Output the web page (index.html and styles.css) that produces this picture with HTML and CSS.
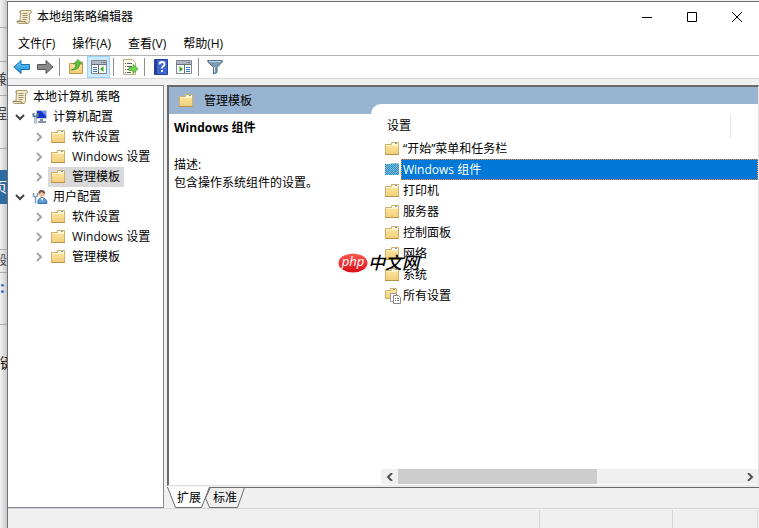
FILE: index.html
```html
<!DOCTYPE html>
<html lang="zh-CN">
    <head>
        <meta charset="utf-8">
        <meta name="viewport" content="width=device-width, initial-scale=1" />
        <title>本地组策略编辑器</title>
        <link rel="stylesheet" href="styles.css">
    </head>
    <body>
        <!-- ICONS -->
        <svg class="icon-defs" width="0" height="0">
            <defs>
                <linearGradient id="gold" x1="0" y1="0" x2="0" y2="1">
                    <stop offset="0" stop-color="#ffe9a6" />
                    <stop offset="1" stop-color="#f2ce78" />
                </linearGradient>
                <linearGradient id="blue" x1="0" y1="0" x2="0" y2="1">
                    <stop offset="0" stop-color="#6fd0fb" />
                    <stop offset="1" stop-color="#118ad8" />
                </linearGradient>
                <linearGradient id="red" x1="0" y1="0" x2="0" y2="1">
                    <stop offset="0" stop-color="#ff5a50" />
                    <stop offset="1" stop-color="#d80c18" />
                </linearGradient>
            </defs>
            <symbol id="folder" viewBox="0 0 16 16">
                <path d="M.5 3.500h6v-2h7v12H.5z" fill="url(#gold)" stroke="#d2b06a" />
                <path d="M7 2h6v2H7z" fill="#fff8dc" />
                <path d="M10 2h2v1h-2z" fill="#5d9fd8" />
                <path d="M1 4.500h12" stroke="#fff2c4" />
                <path d="M0 13.500h14" stroke="#b9924a" />
            </symbol>
            <symbol id="folder-selected" viewBox="0 0 16 16">
                <path d="M0 2h6V1h8v12H0z" fill="#8cc4d0" />
                <path d="M0 2.500h14M0 4.500h14M0 6.500h14M0 8.500h14M0 10.500h14M0 12.500h14M1 3.500h13M1 5.500h13M1 7.500h13M1 9.500h13M1 11.500h13" stroke="#1a86cf" stroke-dasharray="1 1" />
            </symbol>
            <symbol id="scroll" viewBox="0 0 16 16">
                <path d="M4.500 1.500h9.500q1.500 0 1.500 1.500t-2 1.500v7q0 3-2 3h-9q-2-.5-1.500-2.500h3z" fill="#f6ecc9" stroke="#a99a75" />
                <path d="M1 12.500h8.500q0 2 2 2" fill="#e7d9ab" stroke="#94865f" />
                <path d="M4.500 1.500q-1.500 1 0 3h1" fill="none" stroke="#a99a75" />
                <path d="M6.500 4.500h5M6.500 6.500h5M6.500 8.500h5M6.500 10.500h4" stroke="#9c9279" />
            </symbol>
            <symbol id="computer" viewBox="0 0 16 16">
                <path d="M4.500 1.500h10v8h-10z" fill="#1733c8" stroke="#c3c9d5" />
                <path d="M9 2h5v5z" fill="#6f92f3" />
                <path d="M8 10h3v2h3v2H6v-2h2z" fill="#8793a6" />
                <path d="M1.500 4v3l2 1 2-1V4M3.500 8v6.500" fill="none" stroke="#57799c" stroke-width="2" />
                <path d="M3.500 8v6" stroke="#bfdaf0" />
            </symbol>
            <symbol id="user" viewBox="0 0 16 16">
                <path d="M6 14.500q-1-5 4-6 5 1 5 6z" fill="#5d9ad3" stroke="#3770a9" />
                <path d="M8.500 9l1.500 3 1.500-3z" fill="#fff" />
                <circle cx="10" cy="5" r="3" fill="#efc49a" />
                <path d="M6.500 5q-.5-4 3-4 4 0 3.500 4-2-1-3.500-2.500-1 2-3 2.500z" fill="#665044" />
                <path d="M1.500 4v3l2 1 2-1V4M3.500 8v6.500" fill="none" stroke="#7d9dbd" stroke-width="1.500" />
            </symbol>
            <symbol id="all-settings" viewBox="0 0 16 16">
                <path d="M.5 2.500h5v-2h6v10H.5z" fill="url(#gold)" stroke="#d2b06a" />
                <path d="M8 1.500h2" stroke="#5d9fd8" />
                <path d="M5.500 5.500h5l2 2v6h-7z" fill="#fff" stroke="#999" />
                <path d="M8.500 7.500h5l2 2v6h-7z" fill="#fff" stroke="#888" />
                <path d="M10 10.500h1M12 10.500h2M10 12.500h1M12 12.500h2" stroke="#777" />
            </symbol>
            <symbol id="chevron-down" viewBox="0 0 10 10">
                <path d="M1 3l4 4 4-4" fill="none" stroke="#404040" stroke-width="2" />
            </symbol>
            <symbol id="chevron-right" viewBox="0 0 10 10">
                <path d="M3 1l4 4-4 4" fill="none" stroke="#a6a6a6" stroke-width="2" />
            </symbol>
        </svg>

        <div class="desktop">
            <!-- page that shows at the left of the window -->
            <div class="behind" aria-hidden="true">
                <div class="behind-line short"></div>
                <div class="behind-line"></div>
                <div class="behind-line">兼</div>
                <div class="behind-line tall">程</div>
                <div class="behind-gap"></div>
                <div class="behind-blue">页</div>
                <div class="behind-line field"></div>
                <div class="behind-line field-text">段</div>
                <div class="behind-line colon">:</div>
                <div class="behind-key">键</div>
            </div>

            <div class="window">
                <header class="title-bar">
                    <svg class="icon"><use href="#scroll" /></svg>
                    <h1>本地组策略编辑器</h1>
                    <button class="window-button" aria-label="最小化">
                        <svg width="10" height="10"><path d="M0 5.500h10" stroke="#000" /></svg>
                    </button>
                    <button class="window-button" aria-label="最大化">
                        <svg width="10" height="10"><path d="M.5 .5h9v9h-9z" fill="none" stroke="#000" /></svg>
                    </button>
                    <button class="window-button" aria-label="关闭">
                        <svg width="10" height="10"><path d="M0 0l10 10M10 0L0 10" stroke="#000" /></svg>
                    </button>
                </header>

                <nav class="menu-bar">
                    <button>文件(F)</button>
                    <button>操作(A)</button>
                    <button>查看(V)</button>
                    <button>帮助(H)</button>
                </nav>

                <div class="toolbar">
                    <button aria-label="后退">
                        <svg width="18" height="16"><path d="M1 8l7-6.500v4h8.500v5H8v4z" fill="url(#blue)" stroke="#1b6fae" /></svg>
                    </button>
                    <button aria-label="前进">
                        <svg width="18" height="16"><path d="M17 8l-7-6.500v4H1.500v5H10v4z" fill="#8b8b8b" stroke="#555" /></svg>
                    </button>
                    <span class="separator"></span>
                    <button aria-label="上一级">
                        <svg width="16" height="16">
                            <path d="M1.500 4.500h7l1.500-1.500h4.500v11.500h-13z" fill="url(#gold)" stroke="#c09748" />
                            <path d="M3 11q5-1 5-6H5.500L10 .5l4 4.500h-2.500q0 6-8.500 6z" fill="#5cc23c" stroke="#37862a" stroke-width=".7" />
                        </svg>
                    </button>
                    <button class="pressed" aria-label="显示/隐藏控制台树">
                        <svg width="16" height="16">
                            <path d="M.5 1.500h15v13H.5z" fill="#fff" stroke="#7d8590" />
                            <path d="M1 2h14v3H1z" fill="#aeb6c1" />
                            <path d="M1 5.500h14M7.500 6v8M10 3.500h1M12 3.500h2" stroke="#68717e" />
                            <path d="M2 8.500h4M2 10.500h4M2 12.500h4" stroke="#3878bd" />
                            <path d="M12.500 7v6L9 10z" fill="#35a81f" />
                        </svg>
                    </button>
                    <span class="separator"></span>
                    <button aria-label="导出列表">
                        <svg width="16" height="16">
                            <path d="M1.500 .5h9l3 3v12h-12z" fill="#fffbe6" stroke="#b9ad83" />
                            <path d="M3 4.500h1M5 4.500h5M3 7.500h1M5 7.500h5M3 10.500h1M5 10.500h4M3 13.500h1M5 13.500h4" stroke="#55607b" />
                            <path d="M7 8.500h4V5.500l5 4.500-5 4.500v-3H7z" fill="#6fd44f" stroke="#41992c" stroke-width=".7" />
                        </svg>
                    </button>
                    <span class="separator"></span>
                    <button aria-label="帮助">
                        <svg width="14" height="16">
                            <path d="M.5 .5h13v15H.5z" fill="#3f66cf" stroke="#23449d" />
                            <path d="M1 1h2v14H1z" fill="#21408f" />
                            <path d="M5.500 5.500q0-2.500 2.500-2.500t2.500 2.200q0 1.400-1.500 2.200-1 .6-1 2.100M8 11v2" fill="none" stroke="#fff" stroke-width="1.800" />
                        </svg>
                    </button>
                    <button aria-label="显示/隐藏操作窗格">
                        <svg width="16" height="16">
                            <path d="M.5 1.500h15v13H.5z" fill="#fff" stroke="#7d8590" />
                            <path d="M1 2h14v3H1z" fill="#aeb6c1" />
                            <path d="M1 5.500h14M8.500 6v8M10 3.500h1M12 3.500h2" stroke="#68717e" />
                            <path d="M10 8.500h4M10 10.500h4M10 12.500h4" stroke="#3878bd" />
                            <path d="M3.500 7v6L7 10z" fill="#35a81f" />
                        </svg>
                    </button>
                    <span class="separator"></span>
                    <button aria-label="筛选器">
                        <svg width="16" height="16">
                            <path d="M.8 1.500h14.400v1.500L10 8.500v5L6.500 15V8.500L.8 3z" fill="#7c9cb4" stroke="#4e6b82" />
                            <path d="M2 2.500h12" stroke="#c7dbe9" />
                            <path d="M7.500 8v5.500" stroke="#dbe8f0" />
                        </svg>
                    </button>
                </div>

                <div class="panes">
                    <nav class="tree">
                        <button class="tree-item root"><svg class="icon"><use href="#scroll" /></svg><span>本地计算机 策略</span></button>
                        <button class="tree-item branch"><svg class="chevron"><use href="#chevron-down" /></svg><svg class="icon"><use href="#computer" /></svg><span>计算机配置</span></button>
                        <button class="tree-item"><svg class="chevron"><use href="#chevron-right" /></svg><svg class="icon"><use href="#folder" /></svg><span>软件设置</span></button>
                        <button class="tree-item"><svg class="chevron"><use href="#chevron-right" /></svg><svg class="icon"><use href="#folder" /></svg><span>Windows 设置</span></button>
                        <button class="tree-item selected"><svg class="chevron"><use href="#chevron-right" /></svg><svg class="icon"><use href="#folder" /></svg><span>管理模板</span></button>
                        <button class="tree-item branch"><svg class="chevron"><use href="#chevron-down" /></svg><svg class="icon"><use href="#user" /></svg><span>用户配置</span></button>
                        <button class="tree-item"><svg class="chevron"><use href="#chevron-right" /></svg><svg class="icon"><use href="#folder" /></svg><span>软件设置</span></button>
                        <button class="tree-item"><svg class="chevron"><use href="#chevron-right" /></svg><svg class="icon"><use href="#folder" /></svg><span>Windows 设置</span></button>
                        <button class="tree-item"><svg class="chevron"><use href="#chevron-right" /></svg><svg class="icon"><use href="#folder" /></svg><span>管理模板</span></button>
                    </nav>

                    <main class="details">
                        <div class="details-frame">
                            <div class="details-title">
                                <svg class="icon"><use href="#folder" /></svg>
                                <h2>管理模板</h2>
                            </div>
                            <div class="details-body">
                                <section class="description">
                                    <h3>Windows 组件</h3>
                                    <p>描述:</p>
                                    <p>包含操作系统组件的设置。</p>
                                </section>
                                <section class="settings">
                                    <div class="column-header">设置</div>
                                    <div class="setting-list">
                                        <button class="setting"><svg class="icon"><use href="#folder" /></svg><span>“开始”菜单和任务栏</span></button>
                                        <button class="setting selected"><svg class="icon"><use href="#folder-selected" /></svg><span>Windows 组件</span></button>
                                        <button class="setting"><svg class="icon"><use href="#folder" /></svg><span>打印机</span></button>
                                        <button class="setting"><svg class="icon"><use href="#folder" /></svg><span>服务器</span></button>
                                        <button class="setting"><svg class="icon"><use href="#folder" /></svg><span>控制面板</span></button>
                                        <button class="setting"><svg class="icon"><use href="#folder" /></svg><span>网络</span></button>
                                        <button class="setting"><svg class="icon"><use href="#folder" /></svg><span>系统</span></button>
                                        <button class="setting"><svg class="icon"><use href="#all-settings" /></svg><span>所有设置</span></button>
                                    </div>
                                    <div class="scrollbar">
                                        <button aria-label="向左滚动">
                                            <svg width="8" height="8"><path d="M6 0L2 4l4 4" fill="none" stroke="#505050" stroke-width="2" /></svg>
                                        </button>
                                        <div class="scroll-track"><div class="scroll-thumb"></div></div>
                                        <button aria-label="向右滚动">
                                            <svg width="8" height="8"><path d="M2 0l4 4-4 4" fill="none" stroke="#505050" stroke-width="2" /></svg>
                                        </button>
                                    </div>
                                </section>
                            </div>
                            <div class="watermark">
                                <svg width="30" height="20">
                                    <ellipse cx="15" cy="10" rx="14.500" ry="9.500" fill="url(#red)" />
                                    <text x="15" y="13" text-anchor="middle" class="watermark-php">php</text>
                                </svg>
                                <span>中文网</span>
                            </div>
                        </div>
                        <div class="tabs">
                            <svg class="tab-shapes" width="80" height="21">
                                <path d="M43.500 .5L38.500 11l4 9.500h28l7-20z" fill="#f0f0f0" stroke="#6d6d6d" />
                                <path d="M.5 0l8 20.500h26L42.500 0z" fill="#fff" />
                                <path d="M.5 0l8 20.500h26L42.500 0" fill="none" stroke="#6d6d6d" />
                            </svg>
                            <button class="tab">扩展</button>
                            <button class="tab">标准</button>
                        </div>
                    </main>
                </div>

                <footer class="status-bar">
                    <div class="status-main"></div>
                    <div class="status-middle"></div>
                    <div class="status-end"></div>
                </footer>
            </div>
        </div>
    </body>
</html>
```
FILE: styles.css
```css
* {
    box-sizing: border-box;
}

body {
    margin: 0;
    font-family: "Open Sans", "Noto Sans CJK SC", sans-serif;
    font-size: 12px;
    line-height: 20px;
    color: #000;
    background-color: #f0f0f0;
}

h1, h2, h3, p {
    margin: 0;
    font-size: 12px;
    font-weight: 400;
}

button {
    padding: 0;
    border: 0;
    background: none;
    font: inherit;
    color: inherit;
    white-space: nowrap;
}

svg {
    display: block;
    flex: none;
}

.icon-defs {
    position: absolute;
}

.icon {
    width: 16px;
    height: 16px;
}

.desktop {
    display: flex;
    height: 100vh;
    overflow: hidden;
}

/* STRIP AT THE LEFT */

.behind {
    display: flex;
    flex-direction: column;
    width: 7px;
    flex: none;
    overflow: hidden;
    background: linear-gradient(to right, #f2f2f2, #c8c8c8);
    color: #444;
    font-size: 14px;
}

.behind-line {
    display: flex;
    align-items: center;
    justify-content: flex-end;
    height: 34px;
    flex: none;
    border-bottom: 1px solid #aaa;
}

.behind-line.short {
    height: 28px;
}

.behind-line.tall {
    height: 53px;
    padding-bottom: 18px;
}

.behind-gap {
    height: 21px;
    flex: none;
}

.behind-blue {
    display: flex;
    align-items: center;
    justify-content: flex-end;
    height: 34px;
    flex: none;
    background-color: #2d6ca2;
    color: #fff;
}

.behind-line.field {
    height: 46px;
}

.behind-line.field-text {
    height: 23px;
    font-size: 12px;
}

.behind-line.colon {
    height: 52px;
    padding-bottom: 24px;
    justify-content: flex-start;
    color: #2d6ce0;
    font-weight: 700;
    font-size: 16px;
}

.behind-key {
    display: flex;
    justify-content: flex-start;
    padding-top: 28px;
    color: #111;
}

/* WINDOW */

.window {
    display: flex;
    flex-direction: column;
    flex: 1;
    min-width: 0;
    margin-top: 1px;
    border-top: 1px solid #6d6d6d;
    border-left: 1px solid #6f7277;
    background-color: #f0f0f0;
}

.title-bar {
    display: flex;
    align-items: center;
    height: 30px;
    flex: none;
    padding-left: 8px;
    background-color: #fff;
}

.title-bar h1 {
    flex: 1;
    margin-left: 5px;
}

.window-button {
    display: flex;
    align-items: center;
    justify-content: center;
    width: 45px;
    height: 28px;
}

.menu-bar {
    display: flex;
    gap: 17px;
    height: 24px;
    flex: none;
    padding-left: 10px;
    border-bottom: 1px solid #b4b4b4;
    background-color: #fff;
}

.toolbar {
    display: flex;
    align-items: center;
    height: 23px;
    flex: none;
    padding-left: 2px;
    border-bottom: 1px solid #d9d9d9;
    background-color: #fff;
}

.toolbar button {
    display: flex;
    align-items: center;
    justify-content: center;
    width: 23px;
    height: 22px;
}

.toolbar .pressed {
    border: 1px solid #99d1ff;
    background-color: #cce8ff;
}

.separator {
    width: 1px;
    height: 18px;
    margin: 0 4px 0 3px;
    flex: none;
    background-color: #8d8d8d;
}

.panes {
    display: flex;
    flex: 1;
    gap: 3px;
    min-height: 0;
    padding-top: 6px;
}

/* TREE */

.tree {
    display: flex;
    flex-direction: column;
    align-items: flex-start;
    width: 156px;
    flex: none;
    padding: 1px 4px;
    border: 1px solid #828790;
    border-left: 0;
    background-color: #fff;
}

.tree-item {
    display: flex;
    align-items: center;
    height: 20px;
    padding-left: 22px;
}

.tree-item.root {
    padding-left: 0;
}

.tree-item.branch {
    padding-left: 3px;
}

.chevron {
    width: 10px;
    height: 10px;
    margin-right: 7px;
}

.tree-item span {
    padding: 0 4px 0 5px;
}

.tree-item.selected {
    background: linear-gradient(#d9d9d9, #d9d9d9) 36px 0 no-repeat;
}

/* DETAILS */

.details {
    display: flex;
    flex-direction: column;
    flex: 1;
    min-width: 0;
}

.details-frame {
    display: flex;
    flex-direction: column;
    flex: 1;
    position: relative;
    min-height: 0;
    border: 1px solid #e3e3e3;
    border-top: 2px solid #696969;
    border-left: 2px solid #696969;
    background-color: #fff;
}

.details-title {
    display: flex;
    align-items: center;
    gap: 9px;
    height: 27px;
    flex: none;
    padding-left: 10px;
    background-color: #99b4d1;
}

.details-body {
    display: flex;
    flex: 1;
    min-height: 0;
}

.description {
    width: 202px;
    flex: none;
    padding: 5px;
    line-height: 18px;
}

.description h3 {
    margin-bottom: 19px;
    font-weight: 700;
}

.settings {
    display: flex;
    flex-direction: column;
    flex: 1;
    min-width: 0;
    margin-top: -10px;
    padding: 10px 0 0 10px;
    border-top-left-radius: 10px;
    background-color: #fff;
}

.column-header {
    height: 24px;
    margin-right: 27px;
    padding: 2px 6px;
    border-right: 1px solid #e5e5e5;
}

.setting-list {
    flex: 1;
}

.setting {
    display: flex;
    align-items: center;
    width: 100%;
    height: 21px;
    padding-left: 4px;
    text-align: left;
}

.setting span {
    flex: 1;
    padding: 0 1px;
    border: 1px solid transparent;
    line-height: 19px;
}

.setting.selected span {
    border: 1px dotted #ff8728;
    background-color: #0078d7;
    color: #fff;
}

.scrollbar {
    display: flex;
    height: 15px;
    margin-bottom: 1px;
    background-color: #f0f0f0;
}

.scrollbar button {
    display: flex;
    align-items: center;
    justify-content: center;
    width: 17px;
}

.scroll-track {
    flex: 1;
}

.scroll-thumb {
    width: 58%;
    height: 100%;
    background-color: #cdcdcd;
}

.watermark {
    display: flex;
    align-items: center;
    position: absolute;
    top: 166px;
    left: 169px;
    font-size: 17px;
    font-style: italic;
    font-weight: 500;
}

.watermark-php {
    fill: #fff;
    font-size: 13px;
    font-style: italic;
    font-weight: 400;
}

/* TABS AND STATUS */

.tabs {
    display: flex;
    position: relative;
    height: 21px;
    flex: none;
    margin-top: 1px;
    padding-left: 10px;
    gap: 12px;
    border-top: 1px solid #696969;
}

.tab-shapes {
    position: absolute;
    top: -1px;
    left: 0;
}

.tab {
    position: relative;
    height: 20px;
}

.status-bar {
    display: flex;
    height: 20px;
    flex: none;
    padding: 1px 1px 0 0;
    border-top: 1px solid #d7d7d7;
}

.status-bar div {
    border-right: 1px solid #d7d7d7;
}

.status-main {
    flex: 1;
}

.status-middle {
    width: 133px;
}

.status-end {
    width: 85px;
}
```
